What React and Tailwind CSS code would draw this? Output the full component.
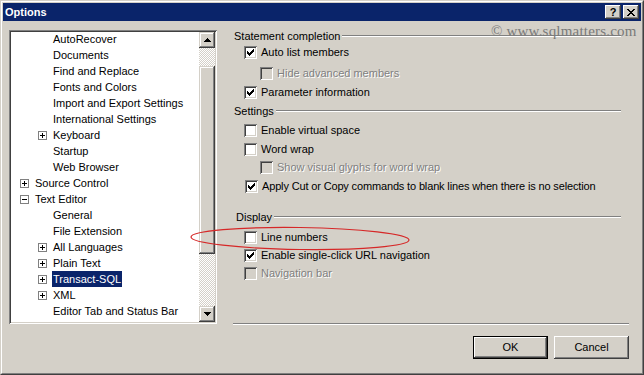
import React from 'react';

const TREE = [
    { text: 'AutoRecover', level: 2 },
    { text: 'Documents', level: 2 },
    { text: 'Find and Replace', level: 2 },
    { text: 'Fonts and Colors', level: 2 },
    { text: 'Import and Export Settings', level: 2 },
    { text: 'International Settings', level: 2 },
    { text: 'Keyboard', level: 2, node: 'plus' },
    { text: 'Startup', level: 2 },
    { text: 'Web Browser', level: 2 },
    { text: 'Source Control', level: 1, node: 'plus' },
    { text: 'Text Editor', level: 1, node: 'minus' },
    { text: 'General', level: 2 },
    { text: 'File Extension', level: 2 },
    { text: 'All Languages', level: 2, node: 'plus' },
    { text: 'Plain Text', level: 2, node: 'plus' },
    { text: 'Transact-SQL', level: 2, node: 'plus', selected: true },
    { text: 'XML', level: 2, node: 'plus' },
    { text: 'Editor Tab and Status Bar', level: 2 },
];

const raised = 'shadow-[inset_-1px_-1px_#404040,inset_1px_1px_#d4d0c8,inset_-2px_-2px_#808080,inset_2px_2px_#fff]';
const raisedBtn = 'shadow-[inset_-1px_-1px_#404040,inset_1px_1px_#fff,inset_-2px_-2px_#808080,inset_2px_2px_#d4d0c8]';
const sunken = 'shadow-[inset_1px_1px_#808080,inset_-1px_-1px_#fff,inset_2px_2px_#404040,inset_-2px_-2px_#d4d0c8]';

function Expander({ type }) {
    return (
        <svg width="9" height="9" viewBox="0 0 9 9" shapeRendering="crispEdges">
            <rect x="0.5" y="0.5" width="8" height="8" fill="#fff" stroke="#808080" />
            <path d="M2 4.5h5" stroke="#000" />
            {type === 'plus' && <path d="M4.5 2v5" stroke="#000" />}
        </svg>
    );
}

function TreeRow({ item }) {
    return (
        <div className="flex items-center h-4">
            <div className={item.level === 1 ? 'w-[9px] shrink-0' : 'w-[27px] shrink-0'} />
            <div className="w-[9px] h-[9px] shrink-0 flex">
                {item.node && <Expander type={item.node} />}
            </div>
            <div className="w-[5px] shrink-0" />
            <span
                className={`px-[1px] leading-4 whitespace-nowrap ${item.selected ? 'bg-[#0a246a] text-white' : 'text-black'}`}
            >
                {item.text}
            </span>
        </div>
    );
}

function Arrow({ dir }) {
    return (
        <svg width="7" height="4" viewBox="0 0 7 4" shapeRendering="crispEdges">
            {dir === 'up'
                ? <path d="M3 0h1v1h1v1h1v1h1v1H0V3h1V2h1V1h1z" fill="#000" />
                : <path d="M0 0h7v1H6v1H5v1H4v1H3V3H2V2H1V1H0z" fill="#000" />}
        </svg>
    );
}

function Check() {
    return (
        <svg width="7" height="7" viewBox="0 0 7 7" shapeRendering="crispEdges">
            <path d="M0 2h1v3H0z M1 3h1v3H1z M2 4h1v3H2z M3 3h1v3H3z M4 2h1v3H4z M5 1h1v3H5z M6 0h1v3H6z" fill="#000" />
        </svg>
    );
}

function CheckRow({ label, checked, disabled, indent, mt, tight }) {
    return (
        <div className={`flex items-center h-4 gap-[4px] ${indent} ${mt}`}>
            <div
                className={`w-[13px] h-[13px] shrink-0 flex items-center justify-center ${sunken} ${disabled ? 'bg-[#d4d0c8]' : 'bg-white'}`}
            >
                {checked && <Check />}
            </div>
            <span
                className={`leading-4 whitespace-nowrap ${tight ? 'tracking-[-0.15px]' : ''} ${disabled ? 'text-[#808080] [text-shadow:1px_1px_0_#fff]' : 'text-black'}`}
            >
                {label}
            </span>
        </div>
    );
}

function GroupLabel({ text, mt, pl }) {
    return (
        <div className={`flex items-center h-4 ${mt} ${pl}`}>
            <span className="leading-4 whitespace-nowrap text-black">{text}</span>
            <div className="flex-1 ml-[2px] h-[2px] border-t border-t-[#808080] border-b border-b-white" />
        </div>
    );
}

export default function App() {
    return (
        <div
            className="w-[644px] h-[375px] border border-t-[#d4d0c8] border-l-[#d4d0c8] border-b-[#404040] border-r-[#404040] overflow-hidden text-[11px]"
            style={{ fontFamily: '"Liberation Sans", Arial, sans-serif' }}
        >
            <div className="w-full h-full border border-t-white border-l-white border-b-[#808080] border-r-[#808080] bg-[#d4d0c8] p-[1px] relative">
                {/* Title bar */}
                <div className="h-[18px] bg-[#0a246a] flex items-center pl-[2px] pr-[2px]">
                    <span className="font-bold text-white leading-none">Options</span>
                    <div className="ml-auto flex gap-[2px]">
                        <div className={`w-4 h-[14px] bg-[#d4d0c8] ${raisedBtn} flex items-center justify-center font-bold text-black text-[11px] leading-none`}>
                            ?
                        </div>
                        <div className={`w-4 h-[14px] bg-[#d4d0c8] ${raisedBtn} flex items-center justify-center`}>
                            <svg width="8" height="7" viewBox="0 0 8 7" shapeRendering="crispEdges">
                                <path d="M0 0h2v1h1v1h2V1h1V0h2v1H7v1H6v1H5v1h1v1h1v1h1v1H6V6H5V5H3v1H2v1H0V6h1V5h1V4h1V3H2V2H1V1H0z" fill="#000" />
                            </svg>
                        </div>
                    </div>
                </div>

                {/* Body */}
                <div className="pt-[9px] pl-[6px] flex items-start">
                    {/* Tree */}
                    <div className={`w-[208px] h-[294px] p-[2px] bg-white ${sunken} flex shrink-0`}>
                        <div className="flex-1 flex flex-col overflow-hidden">
                            <div className="-mt-[1px] flex flex-col">
                                {TREE.map((item) => (
                                    <TreeRow key={item.text} item={item} />
                                ))}
                            </div>
                        </div>
                        <div className="w-4 flex flex-col shrink-0">
                            <div className={`h-4 bg-[#d4d0c8] ${raised} flex items-center justify-center`}>
                                <Arrow dir="up" />
                            </div>
                            <div className="flex-1 bg-[image:repeating-conic-gradient(#fff_0_25%,#d4d0c8_0_50%)] bg-[length:2px_2px] flex flex-col">
                                <div className={`mt-[18px] h-[188px] bg-[#d4d0c8] ${raised}`} />
                            </div>
                            <div className={`h-4 bg-[#d4d0c8] ${raised} flex items-center justify-center`}>
                                <Arrow dir="down" />
                            </div>
                        </div>
                    </div>

                    {/* Options panel */}
                    <div className="ml-[16px] w-[396px] h-[295px] flex flex-col">
                        <div className="flex flex-col pr-[8px]">
                            <GroupLabel text="Statement completion" mt="-mt-[2px]" pl="pl-[1px]" />
                            <CheckRow label="Auto list members" checked indent="pl-[11px]" mt="mt-0" />
                            <CheckRow label="Hide advanced members" disabled indent="pl-[27px]" mt="mt-[5px]" />
                            <CheckRow label="Parameter information" checked indent="pl-[11px]" mt="mt-[3px]" />
                            <GroupLabel text="Settings" mt="mt-[3px]" pl="pl-[1px]" />
                            <CheckRow label="Enable virtual space" indent="pl-[11px]" mt="mt-[3px]" />
                            <CheckRow label="Word wrap" indent="pl-[11px]" mt="mt-[3px]" />
                            <CheckRow label="Show visual glyphs for word wrap" disabled indent="pl-[27px]" mt="mt-[2px]" />
                            <CheckRow label="Apply Cut or Copy commands to blank lines when there is no selection" checked tight indent="pl-[12px]" mt="mt-[3px]" />
                            <GroupLabel text="Display" mt="mt-[15px]" pl="pl-[3px]" />
                            <CheckRow label="Line numbers" indent="pl-[11px]" mt="mt-[4px]" />
                            <CheckRow label="Enable single-click URL navigation" checked indent="pl-[11px]" mt="mt-[2px]" />
                            <CheckRow label="Navigation bar" disabled indent="pl-[11px]" mt="mt-[2px]" />
                        </div>
                        <div className="mt-auto h-[2px] border-t border-t-[#808080] border-b border-b-white" />
                    </div>
                </div>

                {/* Buttons */}
                <div className="mt-[11px] pr-[12px] flex justify-end gap-[6px]">
                    <button className="w-[75px] h-[23px] border border-black p-0 bg-[#d4d0c8] flex">
                        <div className={`flex-1 ${raisedBtn} flex items-center justify-center text-black`}>OK</div>
                    </button>
                    <button className={`w-[75px] h-[23px] bg-[#d4d0c8] ${raisedBtn} flex items-center justify-center text-black`}>
                        Cancel
                    </button>
                </div>

                {/* Watermark */}
                <div
                    className="absolute left-[489px] top-[21px] text-[15px] leading-4 text-[#7a7a7a] whitespace-nowrap tracking-[0.2px]"
                    style={{ fontFamily: '"Liberation Serif", "Times New Roman", serif' }}
                >
                    © www.sqlmatters.com
                </div>

                {/* Annotation ellipse */}
                <svg className="absolute left-[187px] top-[223px]" width="224" height="28" viewBox="0 0 224 28">
                    <ellipse cx="111" cy="13.5" rx="109" ry="11" fill="none" stroke="#d62828" strokeWidth="1.2" transform="rotate(0.8 111 13.5)" />
                </svg>
            </div>
        </div>
    );
}
